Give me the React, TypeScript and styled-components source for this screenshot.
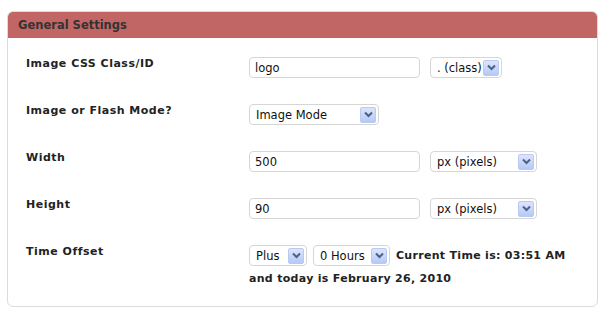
import React from 'react'
import styled, { createGlobalStyle } from 'styled-components'

const GlobalStyle = createGlobalStyle`
  html, body {
    margin: 0;
    padding: 0;
    background: #ffffff;
  }
  body {
    font-family: "DejaVu Sans", Verdana, sans-serif;
    font-size: 11px;
    color: #222;
  }
`

const Page = styled.div`
  padding: 11px 9px 0 7px;
  width: 607px;
  box-sizing: border-box;
`

const Card = styled.div`
  border: 1px solid #dcdcdc;
  border-radius: 6px;
  overflow: hidden;
  height: 296px;
  box-sizing: border-box;
`

const Header = styled.div`
  height: 25px;
  background: #c26665;
  border-bottom: 1px solid #c26665;
  padding-left: 10px;
  display: flex;
  align-items: center;
  font-weight: bold;
  font-size: 11.5px;
  color: #333;
`

const Form = styled.div`
  display: grid;
  grid-template-columns: 223px 1fr;
  row-gap: 26px;
  padding: 19px 0 0 18px;
`

const Label = styled.div`
  font-weight: bold;
  letter-spacing: 0.5px;
  color: #222;
  line-height: 12px;
  padding-top: 1px;
`

const Controls = styled.div<{ gap?: number }>`
  display: flex;
  align-items: center;
  flex-wrap: wrap;
  column-gap: ${({ gap }) => gap ?? 10}px;
`

const TextInput = styled.div`
  width: 171px;
  height: 21px;
  box-sizing: border-box;
  border: 1px solid #d6d6d6;
  border-radius: 4px;
  padding: 0 5px;
  display: flex;
  align-items: center;
  font-size: 11.5px;
  color: #111;
`

const SelectBox = styled.div<{ w: number }>`
  width: ${({ w }) => w}px;
  height: 21px;
  box-sizing: border-box;
  border: 1px solid #d6d6d6;
  border-radius: 4px;
  padding: 0 2px 0 6px;
  display: flex;
  align-items: center;
  justify-content: space-between;
  font-size: 11.5px;
  white-space: nowrap;
  color: #111;
`

const Arrow = styled.span`
  width: 16px;
  height: 16px;
  flex-shrink: 0;
  box-sizing: border-box;
  border: 1px solid #b9c9ef;
  border-radius: 2px;
  background: linear-gradient(#dbe5fd, #b6c8f7);
  display: flex;
  align-items: center;
  justify-content: center;
`

const TimeText = styled.span`
  font-weight: bold;
  letter-spacing: 0.3px;
`

const TodayLine = styled.div`
  width: 100%;
  font-weight: bold;
  letter-spacing: 0.3px;
  margin-top: 6px;
`

const Select: React.FC<{ w: number; value: string }> = ({ w, value }) => (
  <SelectBox w={w}>
    <span>{value}</span>
    <Arrow>
      <svg width="9" height="7" viewBox="0 0 9 7">
        <path d="M1 1.5 L4.5 5 L8 1.5" fill="none" stroke="#4d6185" strokeWidth="2" />
      </svg>
    </Arrow>
  </SelectBox>
)

export default function App() {
  return (
    <Page>
      <GlobalStyle />
      <Card>
        <Header>General Settings</Header>
        <Form>
          <Label>Image CSS Class/ID</Label>
          <Controls>
            <TextInput>logo</TextInput>
            <Select w={72} value=". (class)" />
          </Controls>

          <Label>Image or Flash Mode?</Label>
          <Controls>
            <Select w={130} value="Image Mode" />
          </Controls>

          <Label>Width</Label>
          <Controls>
            <TextInput>500</TextInput>
            <Select w={107} value="px (pixels)" />
          </Controls>

          <Label>Height</Label>
          <Controls>
            <TextInput>90</TextInput>
            <Select w={107} value="px (pixels)" />
          </Controls>

          <Label>Time Offset</Label>
          <Controls gap={6}>
            <Select w={58} value="Plus" />
            <Select w={77} value="0 Hours" />
            <TimeText>Current Time is: 03:51 AM</TimeText>
            <TodayLine>and today is February 26, 2010</TodayLine>
          </Controls>
        </Form>
      </Card>
    </Page>
  )
}
